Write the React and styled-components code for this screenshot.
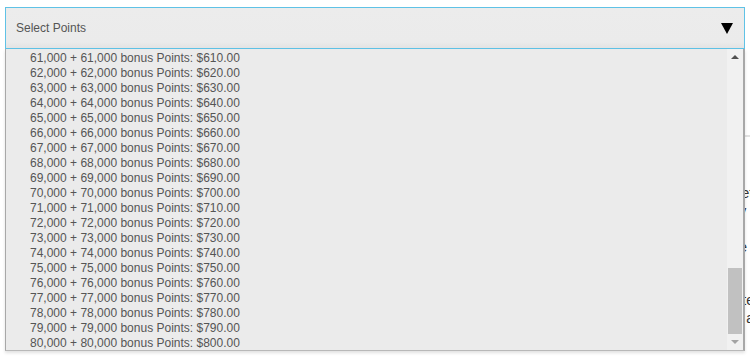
import React from 'react';
import styled, { createGlobalStyle } from 'styled-components';

const GlobalStyle = createGlobalStyle`
  html, body {
    margin: 0;
    padding: 0;
    background: #ffffff;
    overflow: hidden;
  }
  body {
    font-family: "Liberation Sans", Arial, sans-serif;
  }
`;

const Page = styled.div`
  width: 750px;
  height: 357px;
  padding: 7px 5px 0 5px;
  box-sizing: border-box;
`;

const SelectWrap = styled.div`
  position: relative;
  z-index: 2;
`;

const SelectBox = styled.div`
  height: 42px;
  box-sizing: border-box;
  border: 1px solid #5fc2e6;
  background: linear-gradient(to bottom, #ececec 0%, #ebebeb 85%, #e3e3e3 100%);
  display: flex;
  align-items: center;
  justify-content: space-between;
  padding: 0 9px 0 10px;
  color: #555555;
  font-size: 12px;
`;

const Caret = styled.span`
  width: 0;
  height: 0;
  border-left: 6px solid transparent;
  border-right: 6px solid transparent;
  border-top: 11px solid #000000;
  margin-right: 2px;
`;

const Listbox = styled.div`
  position: absolute;
  top: 100%;
  left: 0;
  right: 0;
  height: 302px;
  display: flex;
  background: #ebebeb;
  border-left: 1px solid #a8a8a8;
  border-right: 2px solid #a8a8a8;
  border-bottom: 1px solid #b8b8b8;
  box-shadow: 0 2px 3px rgba(0, 0, 0, 0.12);
  box-sizing: border-box;
`;

const Options = styled.ul`
  flex: 1;
  list-style: none;
  margin: 0;
  padding: 2px 0 0 24px;
  overflow: hidden;
`;

const Option = styled.li`
  height: 15px;
  line-height: 15px;
  font-size: 12px;
  color: #555555;
  white-space: nowrap;
`;

const Scrollbar = styled.div`
  width: 16px;
  background: #f1f1f1;
  display: flex;
  flex-direction: column;
  align-items: center;
`;

const Arrow = styled.div`
  height: 16px;
  width: 16px;
  display: flex;
  align-items: center;
  justify-content: center;
  &::after {
    content: '';
    width: 0;
    height: 0;
    border-left: 4px solid transparent;
    border-right: 4px solid transparent;
    ${p => p.$down
      ? `border-top: 4px solid ${p.$dim ? '#a3a3a3' : '#505050'};`
      : `border-bottom: 4px solid ${p.$dim ? '#a3a3a3' : '#505050'};`}
  }
`;

const Track = styled.div`
  flex: 1;
  width: 100%;
  display: flex;
  flex-direction: column;
  justify-content: flex-end;
  padding: 0 1px;
  box-sizing: border-box;
`;

const Thumb = styled.div`
  height: 66px;
  background: #c1c1c1;
`;

const Content = styled.div`
  margin-top: 86px;
  margin-right: -16px;
  border-top: 2px solid #e2e2e2;
  padding-top: 47px;
  text-align: right;
  font-size: 14px;
  color: #333333;
`;

const Line = styled.p`
  margin: 0;
  height: 18px;
  line-height: 18px;
  white-space: nowrap;
  margin-top: ${p => p.$gap || 0}px;
`;

const rows = Array.from({ length: 20 }, (_, i) => 61 + i);

export default function App() {
  return (
    <>
      <GlobalStyle />
      <Page>
        <SelectWrap>
          <SelectBox>
            <span>Select Points</span>
            <Caret />
          </SelectBox>
          <Listbox>
            <Options>
              {rows.map(n => (
                <Option key={n}>
                  {n},000 + {n},000 bonus Points: ${n * 10}.00
                </Option>
              ))}
            </Options>
            <Scrollbar>
              <Arrow />
              <Track>
                <Thumb />
              </Track>
              <Arrow $down $dim />
            </Scrollbar>
          </Listbox>
        </SelectWrap>
        <Content>
          <Line>Points are added to your account after the purchase is complete</Line>
          <Line>Buy points for a future trip or top up your balance for a stay in</Line>
          <Line>(</Line>
          <Line>Purchases are final and non-refundable once processed by the ic</Line>
          <Line $gap={35}>Bonus points offers may vary and are subject to change at any tes</Line>
          <Line>Please allow up to 48 hours for points to post to your member ac</Line>
        </Content>
      </Page>
    </>
  );
}
